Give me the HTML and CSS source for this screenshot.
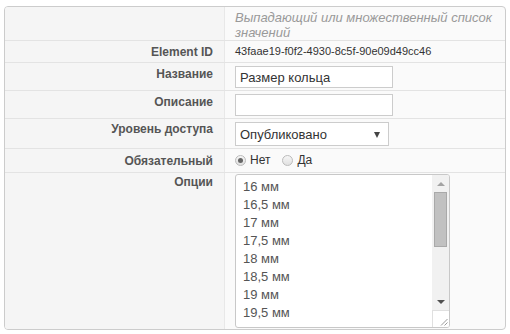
FILE: index.html
```html
<!DOCTYPE html>
<html lang="ru">
<head>
<meta charset="UTF-8">
<meta name="viewport" content="width=device-width, initial-scale=1.0">
<title>Поле: Размер кольца</title>
<link rel="stylesheet" href="styles.css">
</head>
<body>

<div class="field-box">
  <!-- Описание типа поля -->
  <div class="row row-intro">
    <div class="label"></div>
    <div class="value intro">Выпадающий или множественный список значений</div>
  </div>

  <div class="row row-id">
    <div class="label">Element ID</div>
    <div class="value element-id">43faae19-f0f2-4930-8c5f-90e09d49cc46</div>
  </div>

  <div class="row row-input">
    <label class="label" for="fieldName">Название</label>
    <div class="value"><input type="text" id="fieldName" class="text-input" value="Размер кольца"></div>
  </div>

  <div class="row row-input">
    <label class="label" for="fieldDesc">Описание</label>
    <div class="value"><input type="text" id="fieldDesc" class="text-input" value=""></div>
  </div>

  <div class="row row-select">
    <label class="label" for="fieldAccess">Уровень доступа</label>
    <div class="value">
      <div class="select-wrap">
        <select id="fieldAccess" class="select">
          <option>Опубликовано</option>
          <option>Скрыто</option>
        </select>
        <span class="select-arrow"></span>
      </div>
    </div>
  </div>

  <div class="row row-radio">
    <div class="label">Обязательный</div>
    <div class="value radios">
      <span class="radio checked"></span><span class="radio-text">Нет</span>
      <span class="radio"></span><span class="radio-text">Да</span>
    </div>
  </div>

  <div class="row row-options">
    <div class="label">Опции</div>
    <div class="value">
      <!-- Список вариантов -->
      <div class="options">
        <div class="options-list">
          <div>16 мм</div>
          <div>16,5 мм</div>
          <div>17 мм</div>
          <div>17,5 мм</div>
          <div>18 мм</div>
          <div>18,5 мм</div>
          <div>19 мм</div>
          <div>19,5 мм</div>
        </div>
        <div class="scrollbar">
          <div class="sb-button sb-up"><span class="arrow-up"></span></div>
          <div class="sb-track"><div class="sb-thumb"></div></div>
          <div class="sb-button sb-down"><span class="arrow-down"></span></div>
          <div class="sb-corner">
            <svg width="8" height="8" viewBox="0 0 8 8">
              <line x1="7.5" y1="1" x2="1" y2="7.5" stroke="#999" stroke-width="1"/>
              <line x1="7.5" y1="4.5" x2="4.5" y2="7.5" stroke="#999" stroke-width="1"/>
            </svg>
          </div>
        </div>
      </div>
    </div>
  </div>
</div>

</body>
</html>
```

FILE: styles.css
```css
body {
  font-family: "Liberation Sans", Arial, sans-serif;
  margin: 6px 4px 0 4px;
  padding: 0;
  background: #fff;
  color: #333;
}
.field-box {
  border: 1px solid #ccc;
  border-radius: 4px;
  overflow: hidden;
  background-color: #fafafa;
}
.row {
  display: grid;
  grid-template-columns: 220px 1fr;
  border-bottom: 1px solid #e3e3e3;
}
.row:last-child {
  border-bottom: none;
}
.label {
  background-color: #f5f5f5;
  border-right: 1px solid #e8e8e8;
  color: #555;
  font-size: 12px;
  font-weight: bold;
  line-height: 15px;
  text-align: right;
  padding: 4px 11px 0 0;
}
.value {
  padding: 3px 10px 2px 10px;
  font-size: 12px;
  line-height: 15px;
}
.intro {
  font-style: italic;
  font-size: 13px;
  color: #999;
  padding: 3px 10px 0 10px;
}
.element-id {
  font-size: 11px;
  color: #333;
  padding: 3px 10px 3px 10px;
}
.text-input {
  display: block;
  box-sizing: border-box;
  width: 158px;
  height: 22px;
  margin: 0;
  padding: 0 4px;
  border: 1px solid #ccc;
  background: #fff;
  font-family: "Liberation Sans", Arial, sans-serif;
  font-size: 13px;
  color: #333;
  outline: none;
}
.row-select .label {
  padding-top: 3px;
}
.select-wrap {
  position: relative;
  width: 154px;
}
.select {
  display: block;
  box-sizing: border-box;
  width: 154px;
  height: 24px;
  margin: 0;
  padding: 0 4px;
  border: 1px solid #ccc;
  border-radius: 0;
  background: #fff;
  font-family: "Liberation Sans", Arial, sans-serif;
  font-size: 13px;
  color: #333;
  appearance: none;
  -webkit-appearance: none;
  outline: none;
}
.select-arrow {
  position: absolute;
  right: 9px;
  top: 10px;
  width: 0;
  height: 0;
  border-left: 3px solid transparent;
  border-right: 3px solid transparent;
  border-top: 6px solid #444;
}
.row-radio .label {
  padding-top: 5px;
}
.radios {
  display: flex;
  align-items: center;
  padding: 3px 10px 3px 10px;
  height: 17px;
}
.radio {
  box-sizing: border-box;
  width: 11px;
  height: 11px;
  border: 1px solid #bbb;
  border-radius: 50%;
  background: linear-gradient(#f6f6f6, #e0e0e0);
  display: inline-flex;
  align-items: center;
  justify-content: center;
}
.radio.checked::after {
  content: "";
  width: 5px;
  height: 5px;
  border-radius: 50%;
  background: #666;
}
.radio-text {
  font-size: 12px;
  color: #333;
  margin: 0 12px 0 4px;
}
.row-options .label {
  padding-top: 2px;
}
.row-options .value {
  padding: 1px 10px 1px 10px;
}
.options {
  display: flex;
  box-sizing: border-box;
  width: 215px;
  height: 154px;
  border: 1px solid #c8c8c8;
  border-radius: 3px;
  background: #fff;
  overflow: hidden;
}
.options-list {
  flex: 1;
  padding: 3px 7px;
  font-size: 13px;
  line-height: 18px;
  color: #555;
}
.scrollbar {
  width: 17px;
  display: flex;
  flex-direction: column;
  background: #f1f1f1;
}
.sb-button {
  height: 17px;
  display: flex;
  align-items: center;
  justify-content: center;
}
.arrow-up {
  width: 0;
  height: 0;
  border-left: 4px solid transparent;
  border-right: 4px solid transparent;
  border-bottom: 4px solid #a3a3a3;
}
.arrow-down {
  width: 0;
  height: 0;
  border-left: 4px solid transparent;
  border-right: 4px solid transparent;
  border-top: 4px solid #505050;
}
.sb-track {
  flex: 1;
  padding: 0 2px;
}
.sb-thumb {
  box-sizing: border-box;
  height: 55px;
  background: #c1c1c1;
  border: 1px solid #a9a9a9;
}
.sb-corner {
  height: 17px;
  background: #fff;
  border-top: 1px solid #e0e0e0;
  border-left: 1px solid #e0e0e0;
  box-sizing: border-box;
  display: flex;
  align-items: flex-end;
  justify-content: flex-end;
  padding: 0 1px 1px 0;
}
```
